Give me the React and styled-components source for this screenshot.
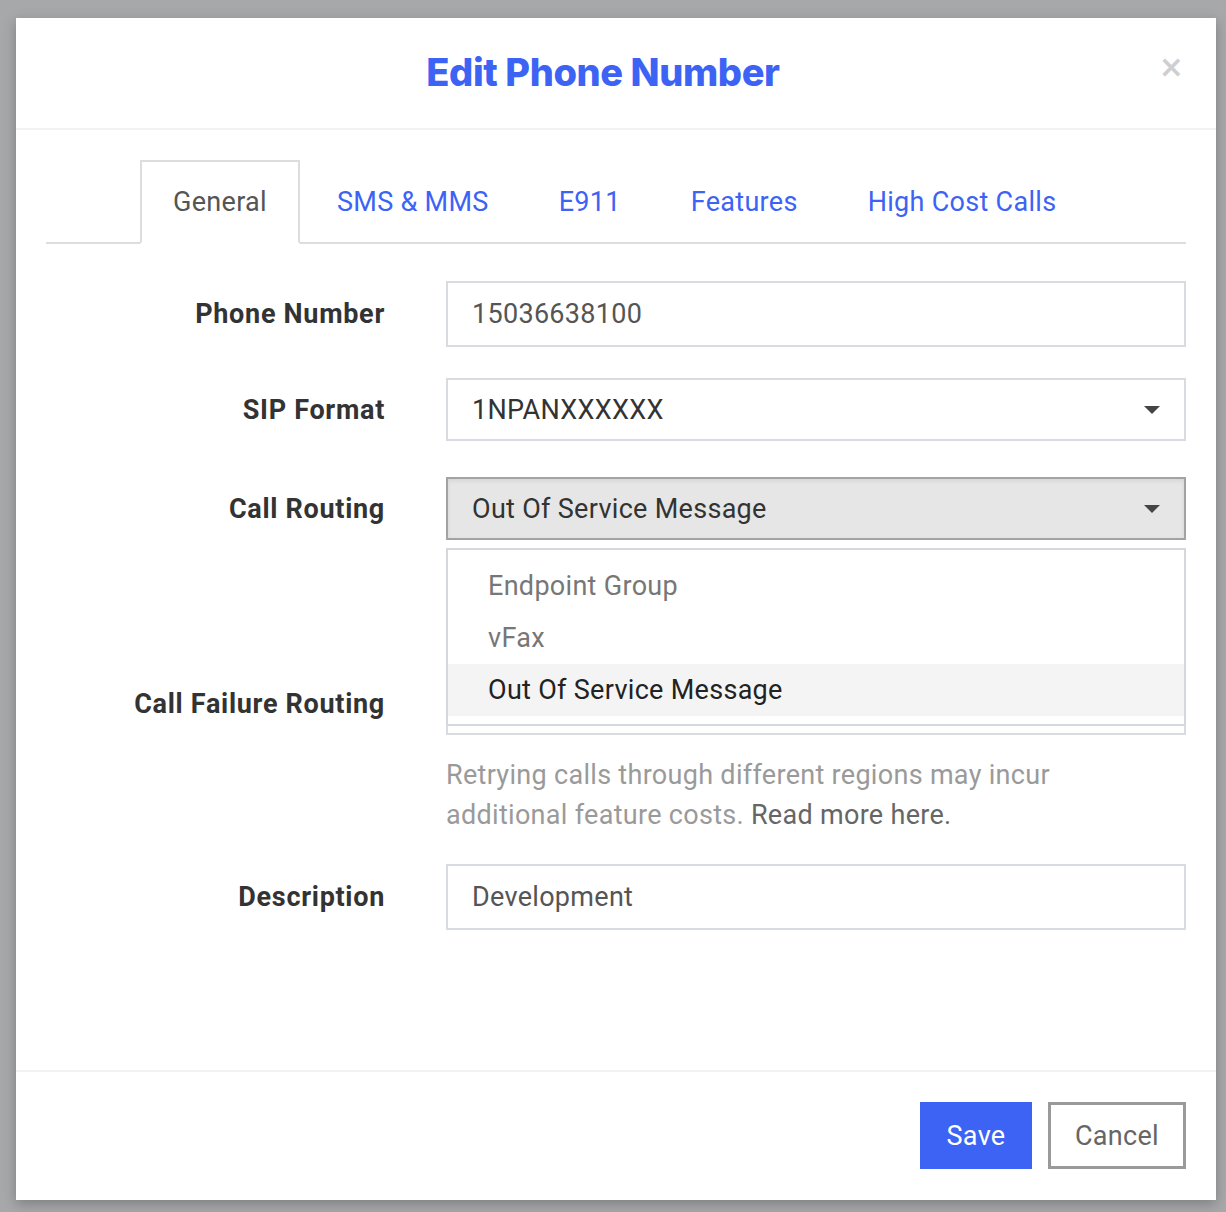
import React from "react";
import styled, { createGlobalStyle } from "styled-components";

const GlobalStyle = createGlobalStyle`
  html, body {
    margin: 0;
    padding: 0;
    background: #a7a8aa;
  }
  * {
    box-sizing: border-box;
  }
`;

const Backdrop = styled.div`
  padding: 18px 10px 12px 16px;
  font-family: Roboto, "Liberation Sans", sans-serif;
`;

const Modal = styled.div`
  width: 1200px;
  height: 1182px;
  background: #fff;
  display: flex;
  flex-direction: column;
  box-shadow: 0 4px 12px rgba(0, 0, 0, 0.25);
`;

const Header = styled.div`
  position: relative;
  height: 112px;
  border-bottom: 2px solid #f2f2f2;
  display: flex;
  align-items: center;
  justify-content: center;
`;

const Title = styled.h1`
  margin: 0 26px 2px 0;
  font-family: Inter, "Liberation Sans", sans-serif;
  font-weight: 800;
  font-size: 38px;
  letter-spacing: -0.4px;
  color: #3d63f5;
`;

const Close = styled.span`
  position: absolute;
  right: 32px;
  top: 34px;
  font-family: "DejaVu Sans", sans-serif;
  font-size: 30px;
  font-weight: bold;
  color: #cfcfcf;
  line-height: 1;
`;

const Body = styled.div`
  flex: 1;
  padding: 30px 30px 0;
`;

const Tabs = styled.div`
  display: flex;
  align-items: flex-end;
  gap: 4px;
  padding-left: 94px;
  border-bottom: 2px solid #dddddd;
  height: 84px;
`;

const Tab = styled.div`
  height: 84px;
  margin-bottom: -2px;
  padding: 0 31px;
  display: flex;
  align-items: center;
  font-size: 27px;
  letter-spacing: 0.3px;
  color: ${(p) => (p.$active ? "#555" : "#3d63f5")};
  border: 2px solid ${(p) => (p.$active ? "#dddddd" : "transparent")};
  border-bottom: 2px solid ${(p) => (p.$active ? "#fff" : "transparent")};
  background: ${(p) => (p.$active ? "#fff" : "transparent")};
`;

const Form = styled.div`
  padding-top: 37px;
  display: flex;
  flex-direction: column;
`;

const Row = styled.div`
  display: grid;
  grid-template-columns: 339px 740px;
  column-gap: 61px;
  margin-bottom: ${(p) => p.$mb ?? 32}px;
  position: relative;
`;

const Label = styled.div`
  text-align: right;
  font-weight: bold;
  font-size: 27px;
  letter-spacing: 0.7px;
  color: #333;
  height: ${(p) => p.$h || 63}px;
  display: flex;
  align-items: center;
  justify-content: flex-end;
  align-self: start;
`;

const Field = styled.div`
  display: flex;
  flex-direction: column;
`;

const Input = styled.div`
  height: ${(p) => p.$h || 66}px;
  border: 2px solid #d8dce0;
  padding: 0 24px;
  display: flex;
  align-items: center;
  font-size: 27px;
  letter-spacing: 0.3px;
  color: #555;
`;

const Select = styled.div`
  height: 63px;
  border: 2px solid ${(p) => (p.$open ? "#a3a3a3" : "#d8dce0")};
  background: ${(p) => (p.$open ? "#e6e6e6" : "#fff")};
  box-shadow: ${(p) => (p.$open ? "inset 0 2px 4px rgba(0,0,0,0.08)" : "none")};
  padding: 0 24px;
  display: flex;
  align-items: center;
  justify-content: space-between;
  font-size: 27px;
  letter-spacing: 0.3px;
  color: #333;
  margin-top: ${(p) => p.$mt || 0}px;
`;

const Caret = styled.span`
  width: 0;
  height: 0;
  margin-left: auto;
  border-left: 8px solid transparent;
  border-right: 8px solid transparent;
  border-top: 8px solid #444;
`;

const Menu = styled.div`
  position: absolute;
  left: 400px;
  top: 71px;
  width: 740px;
  background: #fff;
  border: 2px solid #d4d8dc;
  border-bottom: none;
  padding-top: 10px;
  z-index: 2;
`;

const MenuList = styled.div`
  padding-bottom: 8px;
  border-bottom: 2px solid #d4d8dc;
`;

const Option = styled.div`
  height: 52px;
  padding: 0 40px;
  display: flex;
  align-items: center;
  font-size: 27px;
  letter-spacing: 0.3px;
  color: ${(p) => (p.$selected ? "#222" : "#777")};
  background: ${(p) => (p.$selected ? "#f4f4f4" : "transparent")};
`;

const Help = styled.p`
  margin: 20px 0 0;
  max-width: 640px;
  font-size: 27px;
  letter-spacing: 0.3px;
  line-height: 40px;
  color: #9a9a9a;

  a {
    color: #666;
    text-decoration: none;
  }
`;

const Footer = styled.div`
  border-top: 2px solid #f2f2f2;
  height: 130px;
  padding: 30px 30px 0;
  display: flex;
  justify-content: flex-end;
  align-items: flex-start;
  gap: 16px;
`;

const Button = styled.button`
  height: 67px;
  padding: 0;
  font-family: Roboto, "Liberation Sans", sans-serif;
  font-size: 27px;
  letter-spacing: 0.3px;
  border: ${(p) => (p.$primary ? "none" : "3px solid #9a9a9a")};
  background: ${(p) => (p.$primary ? "#3d63f5" : "#fff")};
  color: ${(p) => (p.$primary ? "#fff" : "#666")};
  width: ${(p) => (p.$primary ? 112 : 138)}px;
`;

const tabs = ["General", "SMS & MMS", "E911", "Features", "High Cost Calls"];

export default function App() {
  return (
    <>
      <GlobalStyle />
      <Backdrop>
        <Modal>
          <Header>
            <Title>Edit Phone Number</Title>
            <Close>×</Close>
          </Header>
          <Body>
            <Tabs>
              {tabs.map((t, i) => (
                <Tab key={t} $active={i === 0}>
                  {t}
                </Tab>
              ))}
            </Tabs>
            <Form>
              <Row $mb={31}>
                <Label $h={66}>Phone Number</Label>
                <Input>15036638100</Input>
              </Row>
              <Row $mb={36}>
                <Label>SIP Format</Label>
                <Select>
                  1NPANXXXXXX
                  <Caret />
                </Select>
              </Row>
              <Row $mb={34}>
                <Label>Call Routing</Label>
                <Field>
                  <Select $open>
                    Out Of Service Message
                    <Caret />
                  </Select>
                  {/* message picker, hidden behind the open menu */}
                  <Select $mt={35}>
                    <Caret />
                  </Select>
                </Field>
                <Menu>
                  <MenuList>
                    <Option>Endpoint Group</Option>
                    <Option>vFax</Option>
                    <Option $selected>Out Of Service Message</Option>
                  </MenuList>
                </Menu>
              </Row>
              <Row $mb={29}>
                <Label>Call Failure Routing</Label>
                <Field>
                  <Select>
                    <Caret />
                  </Select>
                  <Help>
                    Retrying calls through different regions may incur
                    additional feature costs. <a href="#">Read more here.</a>
                  </Help>
                </Field>
              </Row>
              <Row>
                <Label $h={66}>Description</Label>
                <Input>Development</Input>
              </Row>
            </Form>
          </Body>
          <Footer>
            <Button $primary>Save</Button>
            <Button>Cancel</Button>
          </Footer>
        </Modal>
      </Backdrop>
    </>
  );
}
